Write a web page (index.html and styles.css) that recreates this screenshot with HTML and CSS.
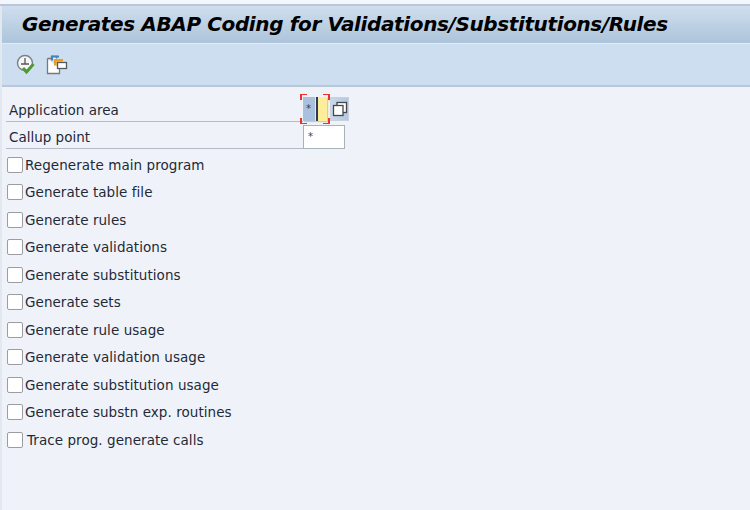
FILE: index.html
```html
<!DOCTYPE html>
<html lang="en">
<head>
    <meta charset="UTF-8">
    <title>Generates ABAP Coding</title>
    <link rel="stylesheet" href="styles.css">
</head>
<body>
    <div class="top-strip"></div>
    <div class="title-bar">
        <h1>Generates ABAP Coding for Validations/Substitutions/Rules</h1>
    </div>
    <div class="toolbar">
        <svg class="tool-icon" width="22" height="22" viewBox="0 0 22 22">
            <circle cx="10" cy="9" r="7.5" fill="#f4f6f8" stroke="#7d7f82" stroke-width="1.4"/>
            <path d="M10 4v6M6 10h8" stroke="#55585c" stroke-width="1.3" fill="none"/>
            <path d="M8 14l3.5 4 7-8" stroke="#4f9a2e" stroke-width="3" fill="none"/>
        </svg>
        <svg class="tool-icon" width="22" height="22" viewBox="0 0 22 22">
            <path d="M1.5 4.5h4v-2h5v2M1.500 4.500v15h12v-5" fill="#fff" stroke="#77797c" stroke-width="1.300"/>
            <path d="M5 1.500h8v2h-6v3h-2z" fill="#3d85c0"/>
            <path d="M8 5h9v2.500h-6.500v4h-2.500z" fill="#f39a1e"/>
            <rect x="11.500" y="8.500" width="9" height="6" fill="#fff" stroke="#55585c" stroke-width="1.300"/>
        </svg>
    </div>
    <div class="content">
        <div class="field-row first">
            <label class="field-label">Application area</label>
            <div class="focus-input">
                <span class="asterisk">*</span>
                <span class="cursor"></span>
                <i class="corner tl"></i><i class="corner tr"></i><i class="corner bl"></i><i class="corner br"></i>
            </div>
            <div class="select-btn">
                <svg width="16" height="16" viewBox="0 0 16 16">
                    <rect x="5" y="1.500" width="9.500" height="10" fill="#fff" stroke="#44474b" stroke-width="1.300"/>
                    <rect x="1.500" y="4.500" width="9.500" height="10" fill="#fff" stroke="#44474b" stroke-width="1.300"/>
                </svg>
            </div>
        </div>
        <div class="field-row">
            <label class="field-label">Callup point</label>
            <div class="text-input"><span class="asterisk">*</span></div>
        </div>
        <div class="checks">
            <div class="check-row"><span class="check"></span>Regenerate main program</div>
            <div class="check-row"><span class="check"></span>Generate table file</div>
            <div class="check-row"><span class="check"></span>Generate rules</div>
            <div class="check-row"><span class="check"></span>Generate validations</div>
            <div class="check-row"><span class="check"></span>Generate substitutions</div>
            <div class="check-row"><span class="check"></span>Generate sets</div>
            <div class="check-row"><span class="check"></span>Generate rule usage</div>
            <div class="check-row"><span class="check"></span>Generate validation usage</div>
            <div class="check-row"><span class="check"></span>Generate substitution usage</div>
            <div class="check-row"><span class="check"></span>Generate substn exp. routines</div>
            <div class="check-row"><span class="check"></span>Trace prog. generate calls</div>
        </div>
    </div>
</body>
</html>
```

FILE: styles.css
```css
html, body {
    height: 100%;
}
body {
    margin: 0;
    display: flex;
    flex-direction: column;
    width: 750px;
    height: 510px;
    overflow: hidden;
    font-family: "DejaVu Sans", sans-serif;
    font-size: 13.5px;
    color: #1f2a38;
    background-color: #e2e8f0;
}
.top-strip {
    height: 4px;
    background-color: #f3f6fc;
    border-bottom: 2px solid #b9c7d9;
}
.title-bar {
    height: 36px;
    display: flex;
    align-items: center;
    padding: 0 0 1px 20px;
    margin-left: 2px;
    background: linear-gradient(#cfdeee, #adc4da);
    border-bottom: 1px solid #e3ebf4;
}
.title-bar h1 {
    margin: 0;
    font-size: 20px;
    font-weight: bold;
    font-style: italic;
    letter-spacing: -0.38px;
    color: #000;
    white-space: nowrap;
}
.toolbar {
    height: 41px;
    display: flex;
    align-items: center;
    gap: 9px;
    padding-left: 13px;
    margin-left: 2px;
    background-color: #cddef0;
    border-bottom: 2px solid #b9c7d9;
}
.content {
    flex: 1;
    margin-left: 2px;
    padding: 10px 0 0 4px;
    background-color: #eff3f9;
}
.field-row {
    display: flex;
    height: 27px;
}
.field-row.first {
    height: 28px;
}
.field-label {
    width: 297px;
    height: 24px;
    line-height: 25px;
    padding-left: 3px;
    box-sizing: border-box;
    border-bottom: 1px solid #b3bcc6;
}
.first .field-label {
    height: 25px;
    padding-top: 2px;
    line-height: 22px;
}
.focus-input {
    position: relative;
    width: 24px;
    height: 24px;
    margin-right: 3px;
    display: flex;
    align-items: center;
    padding-left: 3px;
    box-sizing: border-box;
    background-color: #ffee99;
    background-image: linear-gradient(#a9c1dc, #a9c1dc);
    background-size: 12px 100%;
    background-repeat: no-repeat;
    box-shadow: 1px 1px 1px #d8cfa0;
}
.cursor {
    position: absolute;
    left: 13px;
    top: 0;
    width: 2px;
    height: 24px;
    background-color: #2d3a52;
}
.corner {
    position: absolute;
    width: 5px;
    height: 5px;
    border: 0 solid #f0302c;
}
.corner.tl { left: -3px; top: -3px; border-width: 1px 0 0 2px; }
.corner.tr { right: -3px; top: -3px; border-width: 1px 2px 0 0; }
.corner.bl { left: -3px; bottom: -3px; border-width: 0 0 1px 2px; }
.corner.br { right: -3px; bottom: -3px; border-width: 0 2px 1px 0; }
.asterisk {
    font-size: 10px;
    line-height: 1;
    color: #3a3a5a;
}
.select-btn {
    width: 19px;
    height: 24px;
    display: flex;
    align-items: center;
    justify-content: center;
    box-sizing: border-box;
    background: linear-gradient(to right, #cbd8e8, #b3c8e3);
    border: 1px solid #c9d2dc;
}
.text-input {
    width: 42px;
    height: 24px;
    display: flex;
    align-items: center;
    padding-left: 4px;
    box-sizing: border-box;
    background-color: #fff;
    border: 1px solid #a9b1ba;
}
.checks {
    display: grid;
    grid-auto-rows: 27.5px;
    margin-top: -1px;
}
.check-row {
    display: flex;
    align-items: center;
    white-space: nowrap;
    letter-spacing: 0.06px;
}
.check-row:last-child .check {
    margin-right: 4px;
}
.check {
    width: 14px;
    height: 14px;
    margin: 0 2px 0 1px;
    background-color: #fff;
    border: 1px solid #9a9ea3;
    border-radius: 2px;
}
```
